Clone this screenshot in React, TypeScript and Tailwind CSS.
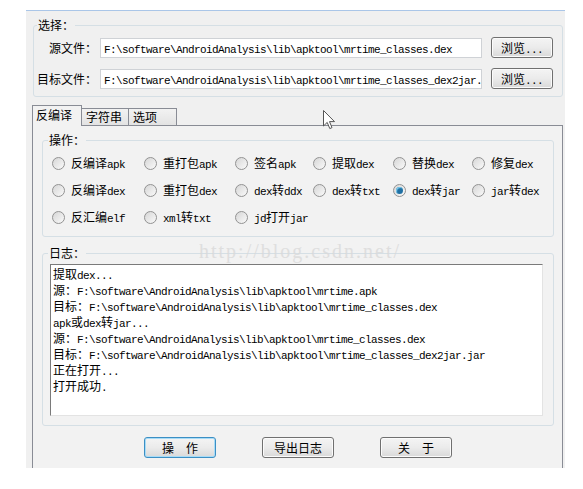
import React from 'react';

const CJK_SPLIT = /([\u3000-\u303f\u4e00-\u9fff\uff00-\uffef]+)/;

// Latin runs in a narrow mono, CJK runs at 12px, like the SimSun look
function Mixed({ text }: { text: string }) {
  return (
    <>
      {text.split(CJK_SPLIT).map((part, i) => {
        if (part === '') return null;
        return i % 2 === 1 ?
            (
              <span key={i}>{part}</span>
            ) :
            (
              <span key={i} className="font-['Liberation_Mono',monospace] text-[11px] tracking-[-0.6px]">{part}</span>
            );
      })}
    </>
  );
}

const SRC = 'F:\\software\\AndroidAnalysis\\lib\\apktool\\mrtime_classes.dex';
const DST = 'F:\\software\\AndroidAnalysis\\lib\\apktool\\mrtime_classes_dex2jar.jar';

const ops = [
  '反编译apk', '重打包apk', '签名apk', '提取dex', '替换dex', '修复dex',
  '反编译dex', '重打包dex', 'dex转ddx', 'dex转txt', 'dex转jar', 'jar转dex',
  '反汇编elf', 'xml转txt', 'jd打开jar',
];

const logLines = [
  '提取dex...',
  '源：F:\\software\\AndroidAnalysis\\lib\\apktool\\mrtime.apk',
  '目标：F:\\software\\AndroidAnalysis\\lib\\apktool\\mrtime_classes.dex',
  'apk或dex转jar...',
  '源：F:\\software\\AndroidAnalysis\\lib\\apktool\\mrtime_classes.dex',
  '目标：F:\\software\\AndroidAnalysis\\lib\\apktool\\mrtime_classes_dex2jar.jar',
  '正在打开...',
  '打开成功.',
];

function WinButton({ label, focused = false, className = '' }: { label: string; focused?: boolean; className?: string }) {
  return (
    <button
      type="button"
      className={`h-[21px] rounded-[3px] border bg-gradient-to-b from-[#f4f4f4] via-[#ebebeb] to-[#d9d9d9] leading-[19px] text-black ${
        focused ?
          'border-[#3c8fc4] shadow-[inset_0_0_0_1px_#a8dcf7]' :
          'border-[#707070] shadow-[inset_0_0_0_1px_#fbfbfb]'
      } ${className}`}
    >
      <Mixed text={label} />
    </button>
  );
}

function Radio({ label, checked = false }: { label: string; checked?: boolean }) {
  return (
    <div className="flex items-center gap-[6px] leading-[16px]">
      <div className="flex h-[13px] w-[13px] items-center justify-center rounded-full border border-[#929292] bg-gradient-to-br from-[#d6d6d6] to-[#fafafa]">
        {checked && (
          <div className="h-[7px] w-[7px] rounded-full bg-[#1f6fa3] shadow-[inset_1px_1px_1px_#7fd0f0]" />
        )}
      </div>
      <span><Mixed text={label} /></span>
    </div>
  );
}

function TextBox({ value }: { value: string }) {
  return (
    <div className="ml-[3px] h-[20px] w-[382px] overflow-hidden whitespace-nowrap border border-[#cfd2d6] bg-white pl-[3px] leading-[18px]">
      <Mixed text={value} />
    </div>
  );
}

function App() {
  return (
    <div className="relative h-[489px] w-[583px] overflow-hidden bg-white font-['Noto_Sans_CJK_SC',sans-serif] text-[12px] leading-[14px] text-black">
      <div className="ml-[26px] mt-[10px] flex h-[458px] w-[539px] flex-col border-t border-[#aac6e8] bg-[#f0f0f0]">
        {/* 选择 group */}
        <fieldset className="ml-[7px] mt-[7px] w-[530px] rounded-[3px] border border-[#d5dfe5] pb-[7px]">
          <legend className="ml-[3px] px-[1px] leading-[14px]"><Mixed text="选择：" /></legend>
          <div className="mt-[5px] flex h-[21px] items-center">
            <div className="w-[63px] text-right leading-[16px]"><Mixed text="源文件：" /></div>
            <TextBox value={SRC} />
            <WinButton label="浏览..." className="ml-[9px] w-[62px]" />
          </div>
          <div className="mt-[10px] flex h-[21px] items-center">
            <div className="w-[63px] text-right leading-[16px]"><Mixed text="目标文件：" /></div>
            <TextBox value={DST} />
            <WinButton label="浏览..." className="ml-[9px] w-[62px]" />
          </div>
        </fieldset>

        {/* tabs */}
        <div className="relative z-10 ml-[6px] mt-[8px] -mb-[1px] flex h-[21px] items-end">
          <div className="h-[21px] w-[50px] border border-b-0 border-[#898c95] bg-[#f2f2f2] pl-[3px] leading-[18px]">
            <Mixed text="反编译" />
          </div>
          <div className="mb-[1px] h-[17px] w-[47px] border border-b-0 border-l-0 border-[#898c95] bg-gradient-to-b from-[#f2f2f2] to-[#e3e3e3] pl-[4px] leading-[16px]">
            <Mixed text="字符串" />
          </div>
          <div className="mb-[1px] h-[17px] w-[48px] border border-b-0 border-l-0 border-[#898c95] bg-gradient-to-b from-[#f2f2f2] to-[#e3e3e3] pl-[4px] leading-[16px]">
            <Mixed text="选项" />
          </div>
        </div>

        {/* tab panel */}
        <div className="ml-[6px] flex w-[531px] flex-1 flex-col border-x border-t border-[#898c95] bg-[#f2f2f2] pl-[9px] pr-[8px] pt-[7px]">
          <fieldset className="rounded-[3px] border border-[#d5dfe5] pb-[5px]">
            <legend className="ml-[5px] px-[1px] leading-[14px]"><Mixed text="操作：" /></legend>
            <div className="mt-[3px] grid grid-cols-[92px_91px_78px_80px_79px_1fr] grid-rows-[27px_27px_27px] items-center pl-[9px]">
              {ops.map((op) => (
                <Radio key={op} label={op} checked={op === 'dex转jar'} />
              ))}
            </div>
          </fieldset>

          <fieldset className="mt-[9px] rounded-[3px] border border-[#d5dfe5] pb-[9px]">
            <legend className="ml-[5px] px-[1px] leading-[14px]"><Mixed text="日志：" /></legend>
            <div className="ml-[7px] mr-[10px] mt-[4px] h-[152px] overflow-hidden border border-b-[#e3e3e3] border-l-[#7a7a7a] border-r-[#e3e3e3] border-t-[#7a7a7a] bg-white pl-[2px] pt-[1px]">
              {logLines.map((line, i) => (
                <div key={i} className="h-[16px] whitespace-nowrap leading-[16px]">
                  <Mixed text={line} />
                </div>
              ))}
            </div>
          </fieldset>

          <div className="mt-[11px] flex justify-center gap-[46px]">
            <WinButton label="操　作" focused className="w-[72px]" />
            <WinButton label="导出日志" className="w-[72px]" />
            <WinButton label="关　于" className="w-[72px]" />
          </div>
        </div>
      </div>

      {/* watermark */}
      <div className="pointer-events-none absolute left-[199px] top-[239px] font-['Liberation_Serif',serif] text-[20px] leading-[24px] tracking-[2px] text-[#dadada] opacity-80">
        http://blog.csdn.net/
      </div>

      {/* mouse cursor */}
      <svg className="absolute left-[323px] top-[110px]" width="13" height="20" viewBox="0 0 13 20">
        <path d="M0.5 0.5 L0.5 16 L4.2 12.4 L6.8 18.6 L9 17.6 L6.5 11.6 L11.5 11.6 Z" fill="#ffffff" stroke="#555555" strokeWidth="1" />
      </svg>
    </div>
  );
}

export default App;
